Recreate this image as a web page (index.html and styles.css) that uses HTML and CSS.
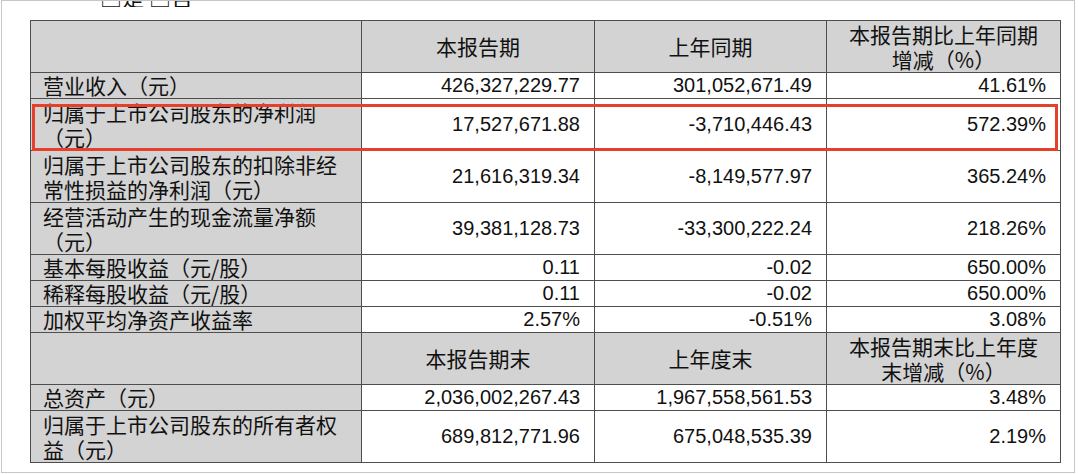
FILE: index.html
```html
<!DOCTYPE html>
<html lang="zh-CN">
<head>
<meta charset="utf-8">
<title>主要会计数据和财务指标</title>
<link rel="stylesheet" href="styles.css">
</head>
<body>
<div class="page">
  <div class="prev"><span class="prev-text">□是 □否</span></div>
  <div class="table-wrap">
    <table class="fin">
      <colgroup>
        <col class="c1"><col class="c2"><col class="c3"><col class="c4">
      </colgroup>
      <tr class="two">
        <td class="lbl"></td>
        <td class="hd">本报告期</td>
        <td class="hd">上年同期</td>
        <td class="hd">本报告期比上年同期增减（%）</td>
      </tr>
      <tr class="one">
        <td class="lbl">营业收入（元）</td>
        <td class="num">426,327,229.77</td>
        <td class="num">301,052,671.49</td>
        <td class="num">41.61%</td>
      </tr>
      <tr class="two">
        <td class="lbl">归属于上市公司股东的净利润（元）</td>
        <td class="num">17,527,671.88</td>
        <td class="num">-3,710,446.43</td>
        <td class="num">572.39%</td>
      </tr>
      <tr class="two">
        <td class="lbl">归属于上市公司股东的扣除非经常性损益的净利润（元）</td>
        <td class="num">21,616,319.34</td>
        <td class="num">-8,149,577.97</td>
        <td class="num">365.24%</td>
      </tr>
      <tr class="two">
        <td class="lbl">经营活动产生的现金流量净额（元）</td>
        <td class="num">39,381,128.73</td>
        <td class="num">-33,300,222.24</td>
        <td class="num">218.26%</td>
      </tr>
      <tr class="one">
        <td class="lbl">基本每股收益（元/股）</td>
        <td class="num">0.11</td>
        <td class="num">-0.02</td>
        <td class="num">650.00%</td>
      </tr>
      <tr class="one">
        <td class="lbl">稀释每股收益（元/股）</td>
        <td class="num">0.11</td>
        <td class="num">-0.02</td>
        <td class="num">650.00%</td>
      </tr>
      <tr class="one">
        <td class="lbl">加权平均净资产收益率</td>
        <td class="num">2.57%</td>
        <td class="num">-0.51%</td>
        <td class="num">3.08%</td>
      </tr>
      <tr class="two">
        <td class="lbl"></td>
        <td class="hd">本报告期末</td>
        <td class="hd">上年度末</td>
        <td class="hd">本报告期末比上年度末增减（%）</td>
      </tr>
      <tr class="one">
        <td class="lbl">总资产（元）</td>
        <td class="num">2,036,002,267.43</td>
        <td class="num">1,967,558,561.53</td>
        <td class="num">3.48%</td>
      </tr>
      <tr class="two">
        <td class="lbl">归属于上市公司股东的所有者权益（元）</td>
        <td class="num">689,812,771.96</td>
        <td class="num">675,048,535.39</td>
        <td class="num">2.19%</td>
      </tr>
    </table>
    <div class="highlight"></div>
  </div>
</div>
</body>
</html>
```

FILE: styles.css
```css
* {
  box-sizing: border-box;
}

html,
body {
  margin: 0;
  padding: 0;
  background: #ffffff;
}

body {
  width: 1078px;
  height: 474px;
  overflow: hidden;
  font-family: "Liberation Sans", "Noto Sans CJK SC", sans-serif;
  color: #111111;
}

.page {
  margin-left: 1px;
  width: 1074px;
  height: 473px;
  border: 1px solid #c6c6c6;
  padding-left: 28px;
}

.prev {
  height: 6px;
  overflow: hidden;
  display: flex;
  align-items: flex-end;
  padding-left: 70px;
  margin-bottom: 13px;
  font-family: "Noto Sans CJK SC", sans-serif;
  font-size: 22px;
  line-height: 22px;
}

.table-wrap {
  position: relative;
  width: 1030px;
}

.fin {
  border-collapse: collapse;
  table-layout: fixed;
  width: 1030px;
}

.c1 { width: 331px; }
.c2 { width: 233px; }
.c3 { width: 232px; }
.c4 { width: 234px; }

.fin td {
  border: 1px solid #4e4e4e;
  padding: 0 14px;
  font-size: 20px;
  line-height: 25px;
  vertical-align: middle;
  background: #ffffff;
}

.fin tr.one td {
  height: 26px;
}

.fin tr.two td {
  height: 52px;
}

.fin td.lbl {
  background: #d3d3d3;
  font-family: "Noto Sans CJK SC", "Liberation Sans", sans-serif;
  font-size: 21px;
  padding-left: 12px;
  text-align: left;
}

.fin td.hd {
  background: #d3d3d3;
  font-family: "Noto Sans CJK SC", "Liberation Sans", sans-serif;
  font-size: 21px;
  text-align: center;
}

.fin td.num {
  text-align: right;
}

.highlight {
  position: absolute;
  left: 2px;
  top: 84px;
  width: 1026px;
  height: 47px;
  border: 3px solid #e4402b;
  pointer-events: none;
}
```
